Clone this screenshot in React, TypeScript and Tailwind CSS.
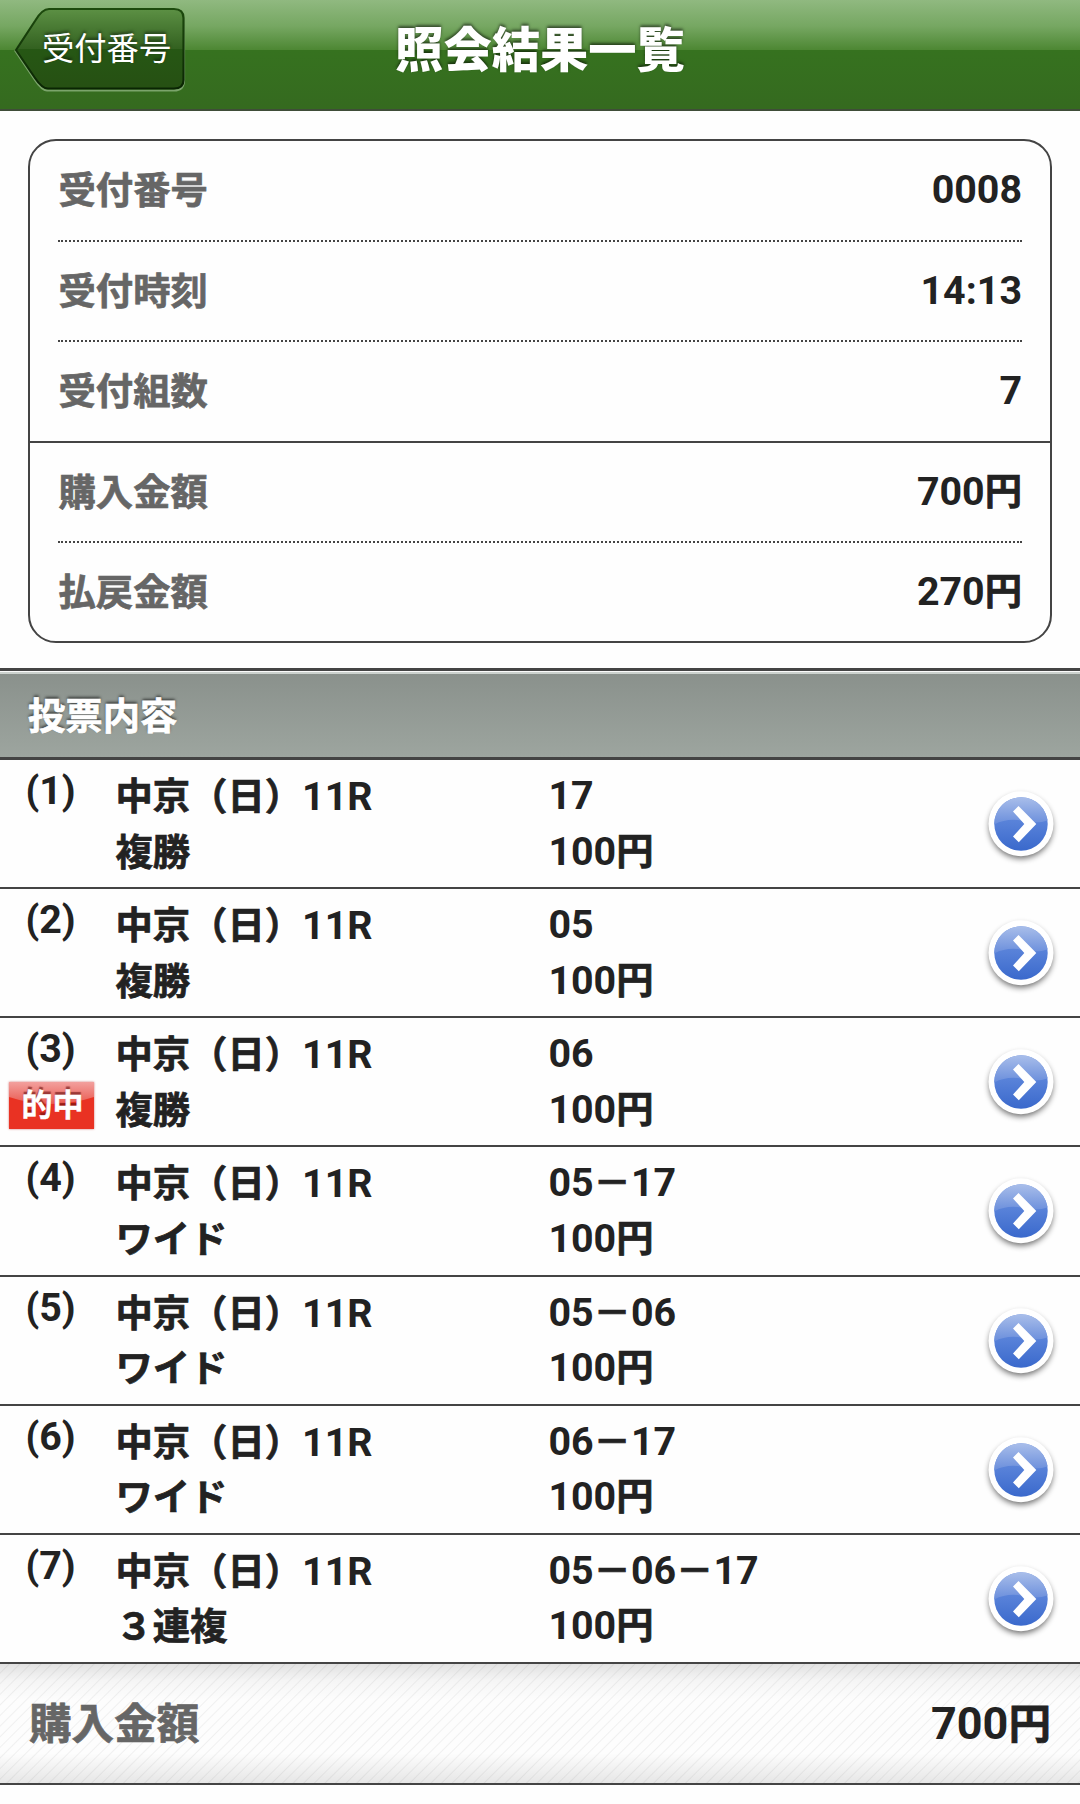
import React from 'react';

interface Bet {
  race: string;
  type: string;
  combo: string;
  amount: string;
  hit?: boolean;
}

const DOTTED = 'border-b-2 border-dotted border-[#444]';

const SUMMARY = [
  { label: '受付番号', value: '0008', row: 'h-[101px]', inner: `${DOTTED} pb-[2px]` },
  { label: '受付時刻', value: '14:13', row: 'h-[100px]', inner: DOTTED },
  { label: '受付組数', value: '7', row: 'h-[101px] border-b-2 border-[#444]', inner: 'pb-[2px]' },
  { label: '購入金額', value: '700円', row: 'h-[100px]', inner: DOTTED },
  { label: '払戻金額', value: '270円', row: 'h-[98px]', inner: '' },
];

const BETS: Bet[] = [
  { race: '中京（日）11R', type: '複勝', combo: '17', amount: '100円' },
  { race: '中京（日）11R', type: '複勝', combo: '05', amount: '100円' },
  { race: '中京（日）11R', type: '複勝', combo: '06', amount: '100円', hit: true },
  { race: '中京（日）11R', type: 'ワイド', combo: '05－17', amount: '100円' },
  { race: '中京（日）11R', type: 'ワイド', combo: '05－06', amount: '100円' },
  { race: '中京（日）11R', type: 'ワイド', combo: '06－17', amount: '100円' },
  { race: '中京（日）11R', type: '３連複', combo: '05－06－17', amount: '100円' },
];

// Latin runs are set slightly larger than the kanji around them,
// and the kanji get a thin stroke so both look equally heavy
const Mixed: React.FC<{ text: string }> = ({ text }) => (
  <>
    {text.split(/([\x20-\x7e]+)/).filter(Boolean).map((part, i) => (
      /^[\x20-\x7e]/.test(part)
        ? <span key={i} className="text-[1.055em]">{part}</span>
        : <span key={i} className="[-webkit-text-stroke:0.7px_currentColor]">{part}</span>
    ))}
  </>
);

const BackButton: React.FC = () => (
  <button className="relative block w-[172px] h-[86px]">
    <svg width="172" height="86" viewBox="0 0 172 86" fill="none" className="block">
      <defs>
        <linearGradient id="backFill" x1="0" y1="0" x2="0" y2="1">
          <stop offset="0" stopColor="#5c9044" />
          <stop offset="0.5" stopColor="#336120" />
          <stop offset="0.5" stopColor="#265714" />
          <stop offset="1" stopColor="#265013" />
        </linearGradient>
        <linearGradient id="backLine" x1="0" y1="0" x2="0" y2="1">
          <stop offset="0" stopColor="#1d4a0d" />
          <stop offset="1" stopColor="#0a2503" />
        </linearGradient>
      </defs>
      <path d="M1.5 44 L22 16 Q28 5 35 4 H160 Q170 4 170 14 V73 Q170 83.5 160 83.5 H33 Q28 83.5 21 73 Z" stroke="#7ba46b" strokeWidth="2.2" />
      <path d="M2 43 L21 14 Q28 2 35 2 H160 Q169.5 2 169.5 11 V73 Q169.5 81.5 160 81.5 H34 Q28 81.5 21 71 Z" fill="url(#backFill)" stroke="url(#backLine)" strokeWidth="2.2" />
    </svg>
    <span className="absolute inset-0 pl-[28px] pb-px flex items-center text-[32.3px] leading-none text-white font-normal whitespace-nowrap [text-shadow:0_-2px_3px_rgba(0,0,0,0.5)]">
      受付番号
    </span>
  </button>
);

const ArrowIcon: React.FC = () => (
  <svg width="80" height="84" viewBox="0 0 80 84" className="block">
    <defs>
      <linearGradient id="arrowBase" x1="0" y1="0" x2="0" y2="1">
        <stop offset="0" stopColor="#6f93df" />
        <stop offset="0.5" stopColor="#5680d8" />
        <stop offset="1" stopColor="#3a69cc" />
      </linearGradient>
      <linearGradient id="arrowGloss" x1="0" y1="0" x2="0" y2="1">
        <stop offset="0.1" stopColor="#a9beea" />
        <stop offset="1" stopColor="#668bdb" />
      </linearGradient>
      <filter id="arrowShadow" x="-30%" y="-30%" width="160%" height="160%">
        <feGaussianBlur stdDeviation="3" />
      </filter>
      <clipPath id="arrowClip"><circle cx="40" cy="40" r="26.7" /></clipPath>
    </defs>
    <circle cx="40" cy="43" r="31.5" fill="#000" opacity="0.6" filter="url(#arrowShadow)" />
    <circle cx="40" cy="39.7" r="32.5" fill="#fff" />
    <circle cx="40" cy="40" r="26.7" fill="url(#arrowBase)" />
    <path d="M10 42 Q26 33 42 37 T70 35 V10 H10 Z" fill="url(#arrowGloss)" clipPath="url(#arrowClip)" />
    <path d="M37.5 22 L55.3 40 L37.8 58.3 L32 52.6 L43.3 40 L32 27.4 Z" fill="#fff" />
  </svg>
);

const HitBadge: React.FC = () => (
  <span className="absolute left-[9px] top-[64px] w-[85px] h-[47px] overflow-hidden bg-[#e93223] shadow-[0_0_2px_rgba(200,80,80,0.8)]">
    <svg width="85" height="47" viewBox="0 0 85 47" className="absolute inset-0">
      <defs>
        <linearGradient id="hitGloss" x1="0" y1="0" x2="0" y2="1">
          <stop offset="0" stopColor="#f2a09d" />
          <stop offset="1" stopColor="#ea5a50" />
        </linearGradient>
      </defs>
      <path d="M0 0 H85 V15 Q42 29 0 15 Z" fill="url(#hitGloss)" />
    </svg>
    <span className="absolute inset-0 pl-[2px] flex items-center justify-center text-[31px] leading-none text-white font-bold [-webkit-text-stroke:0.5px_white] [text-shadow:0_-3px_1px_rgba(100,10,10,0.6)]">
      的中
    </span>
  </span>
);

const BetRow: React.FC<{ bet: Bet; index: number }> = ({ bet, index }) => (
  <li className="relative h-[129.15px] border-b-2 border-[#444] flex items-start">
    <div className="w-[115.4px] pl-[25.5px] pt-[3px] leading-[56px]">
      <Mixed text={`(${index + 1})`} />
    </div>
    <div className="w-[433px] pt-[9px] leading-[55.6px]">
      <p className="h-[56.6px]"><Mixed text={bet.race} /></p>
      <p className="h-[55.6px]"><Mixed text={bet.type} /></p>
    </div>
    <div className="flex-1 pt-[8px] leading-[55.6px]">
      <p className="h-[55.6px]"><Mixed text={bet.combo} /></p>
      <p className="h-[55.6px]"><Mixed text={bet.amount} /></p>
    </div>
    <div className="w-[80px] mr-[19px] mt-[24px]">
      <ArrowIcon />
    </div>
    {bet.hit && <HitBadge />}
  </li>
);

const App: React.FC = () => {
  return (
    <div className="w-[1080px] h-[1804px] bg-[#fefefe] overflow-hidden text-[#222] font-bold text-[37.33px] font-[Roboto,'Noto_Sans_CJK_JP',sans-serif]">
      {/* Header */}
      <header className="h-[111px] border-b-2 border-[#3f4d38] bg-[linear-gradient(to_bottom,#90b980_0%,#76a762_24%,#4d8733_45.8%,#36721f_45.9%,#356a1f_100%)] grid grid-cols-[290px_1fr_290px] items-start">
        <div className="pl-[14px] pt-[7px]">
          <BackButton />
        </div>
        <h1 className="text-center text-white text-[48.3px] leading-[101px] font-black [text-shadow:0_-2px_3px_rgba(0,0,0,0.55)]">照会結果一覧</h1>
      </header>

      {/* Summary card */}
      <section className="mx-[28px] mt-[28px] h-[504px] border-2 border-[#444] rounded-[28px]">
        {SUMMARY.map(item => (
          <div key={item.label} className={`px-[28px] ${item.row}`}>
            <div className={`h-full flex items-center justify-between leading-[56px] ${item.inner}`}>
              <span className="text-[#666] pt-[2px] pl-[0.5px]"><Mixed text={item.label} /></span>
              <span><Mixed text={item.value} /></span>
            </div>
          </div>
        ))}
      </section>

      {/* Section heading */}
      <h2 className="mt-[25px] h-[92px] border-y-[3px] border-[#444] pl-[28px] text-white leading-[92px] bg-[linear-gradient(to_bottom,#fafafa_0px,#fafafa_1px,#ccd2ce_1px,#ccd2ce_3px,#8a918c_3px,#9da59f_100%)] [text-shadow:0_-2px_3px_rgba(0,0,0,0.6)]">
        <Mixed text="投票内容" />
      </h2>

      <ul className="h-[904px]">
        {BETS.map((bet, i) => <BetRow key={i} bet={bet} index={i} />)}
      </ul>

      {/* Total */}
      <footer className="h-[121px] border-b-2 border-[#444] pl-[29px] pr-[29px] flex items-center justify-between text-[42.6px] bg-[linear-gradient(to_bottom,rgba(0,0,0,0.11)_0%,rgba(0,0,0,0.03)_14%,transparent_30%,transparent_75%,rgba(0,0,0,0.09)_100%),repeating-linear-gradient(135deg,#fdfdfd_0px,#fdfdfd_5.5px,#f0f0f0_6.5px,#fdfdfd_7.5px)]">
        <span className="text-[#666] pt-[3px]"><Mixed text="購入金額" /></span>
        <span><Mixed text="700円" /></span>
      </footer>
    </div>
  );
};

export default App;
